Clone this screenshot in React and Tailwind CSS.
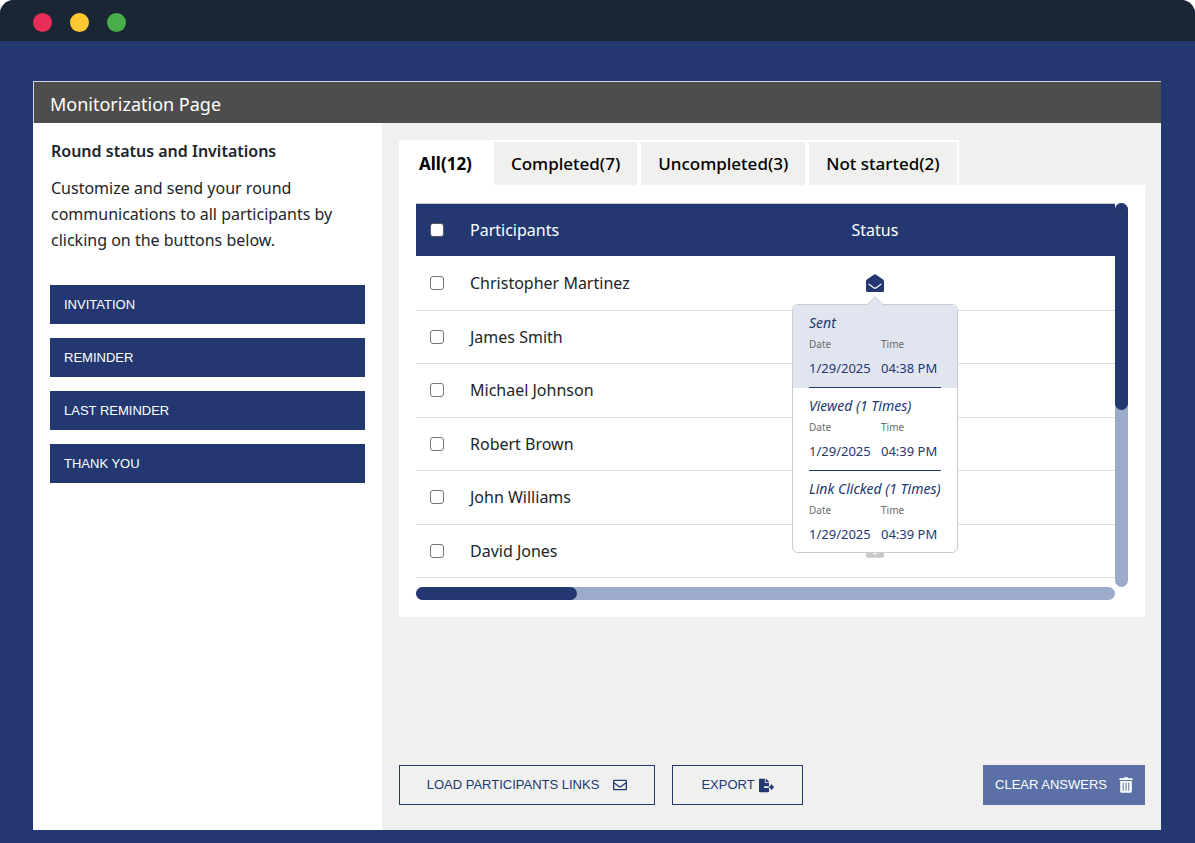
import React, { useState } from "react";
import { FaEnvelope, FaRegEnvelope, FaFileExport } from "react-icons/fa";

const mailings = ["Invitation", "Reminder", "Last reminder", "Thank you"];

const tabs = [
  { id: "all", label: "All(12)" },
  { id: "completed", label: "Completed(7)" },
  { id: "uncompleted", label: "Uncompleted(3)" },
  { id: "notStarted", label: "Not started(2)" },
];

const participants = [
  "Christopher Martinez",
  "James Smith",
  "Michael Johnson",
  "Robert Brown",
  "John Williams",
  "David Jones",
];

const history = [
  { title: "Sent", date: "1/29/2025", time: "04:38 PM" },
  { title: "Viewed (1 Times)", date: "1/29/2025", time: "04:39 PM" },
  { title: "Link Clicked (1 Times)", date: "1/29/2025", time: "04:39 PM" },
];

function OpenEnvelope() {
  return (
    <svg viewBox="0 0 18 18" className="block h-[18px] w-[18px]" aria-hidden="true">
      <path
        d="M8.2.5a1.4 1.4 0 0 1 1.6 0l7.3 5.1c.6.4.9 1 .9 1.7v9.2c0 .8-.6 1.5-1.5 1.5h-15C.6 18 0 17.3 0 16.5V7.3c0-.7.3-1.3.9-1.7Z"
        fill="#233871"
      />
      <path d="m3 10.2 4.7 3.5c.8.6 1.8.6 2.6 0L15 10.2" fill="none" stroke="#fff" strokeWidth="1.1" strokeLinecap="round" />
    </svg>
  );
}

function TrashIcon() {
  return (
    <svg viewBox="0 0 14 16" className="h-4 w-3.5" aria-hidden="true">
      <path d="M4.6 1.2C4.8.5 5.2.2 5.8.2h2.4c.6 0 1 .3 1.2 1h3.4c.6 0 .9.3.9.8v1H.3V2c0-.5.3-.8.9-.8Z" fill="#fff" />
      <path d="M1.2 4h11.6v10.3c0 .9-.6 1.5-1.5 1.5H2.7c-.9 0-1.5-.6-1.5-1.5Z" fill="#fff" />
      <path d="M4.2 6v7.5M7 6v7.5M9.8 6v7.5" stroke="#5b70a6" strokeWidth="1" strokeLinecap="round" />
    </svg>
  );
}

function StatusPopover() {
  return (
    <div className="absolute top-full left-1/2 z-10 mt-3 w-[166px] -translate-x-1/2 rounded-md border border-[#c9cbce] bg-white text-left text-[#233871]">
      <svg viewBox="0 0 18 10" className="absolute bottom-full left-1/2 -mb-px h-2.5 w-[18px] -translate-x-1/2" aria-hidden="true">
        <path d="M0 10 9 1l9 9Z" fill="#e1e5f0" />
        <path d="M0 9.5 9 .7l9 8.8" fill="none" stroke="#c9cbce" />
      </svg>
      {history.map((item, i) => (
        <div
          key={item.title}
          className={`h-[83px] px-4 pt-2.5 last:h-[81px] ${i === 0 ? "rounded-t-md bg-[#e1e5f0]" : ""}`}
        >
          <div className={`flex h-full flex-col ${i < history.length - 1 ? "border-b border-[#233871]" : ""}`}>
            <p className="text-[14px] leading-4 whitespace-nowrap italic">{item.title}</p>
            <dl className="mt-[5px] grid grid-cols-[72px_1fr]">
              <div>
                <dt className="text-[10px] leading-4 text-[#6b6b6b]">Date</dt>
                <dd className="mt-1.5 text-[13px] leading-5">{item.date}</dd>
              </div>
              <div>
                <dt className="text-[10px] leading-4 text-[#6b6b6b]">Time</dt>
                <dd className="mt-1.5 text-[13px] leading-5 whitespace-nowrap">{item.time}</dd>
              </div>
            </dl>
          </div>
        </div>
      ))}
    </div>
  );
}

function Checkbox({ label, checked, onChange, header }) {
  return (
    <input
      type="checkbox"
      aria-label={label}
      checked={checked}
      onChange={onChange}
      className={`block h-3.5 w-3.5 appearance-none rounded-[3px] border bg-white checked:bg-[#9dabcb] ${
        header ? "border-[#55555f]" : "border-[#767676]"
      }`}
    />
  );
}

export default function App() {
  const [activeTab, setActiveTab] = useState("all");
  const [selected, setSelected] = useState([]);

  const toggle = (name) =>
    setSelected((prev) => (prev.includes(name) ? prev.filter((n) => n !== name) : [...prev, name]));
  const allSelected = selected.length === participants.length;

  return (
    <div className="flex min-h-screen flex-col overflow-hidden rounded-t-[14px] bg-[#233871] font-['Noto_Sans',sans-serif] text-[#212529]">
      {/* Window bar */}
      <div className="flex h-[41px] items-center gap-[18px] bg-[#1a2634] px-[33px] pt-[3px]">
        <span className="h-[19px] w-[19px] rounded-full bg-[#e82e58]" />
        <span className="h-[19px] w-[19px] rounded-full bg-[#ffc730]" />
        <span className="h-[19px] w-[19px] rounded-full bg-[#49ae49]" />
      </div>

      <div className="flex flex-1 flex-col pt-10 pr-[34px] pb-[13px] pl-[33px]">
        <header className="border-t border-l border-[#d5d5e0] bg-[#4d4d4d] px-4 pt-1">
          <h1 className="text-[18px] leading-[37px] text-white">Monitorization Page</h1>
        </header>

        <div className="flex flex-1">
          {/* Sidebar */}
          <aside className="w-[349px] shrink-0 bg-white px-[17px] pt-4">
            <h2 className="px-px text-[16px] leading-6 font-semibold">Round status and Invitations</h2>
            <p className="mt-3 px-px text-[16px] leading-[26px]">
              Customize and send your round communications to all participants by clicking on the buttons below.
            </p>
            <div className="mt-8 flex flex-col gap-3.5">
              {mailings.map((name) => (
                <button
                  key={name}
                  type="button"
                  className="h-[39px] bg-[#233871] px-3.5 text-left font-['Liberation_Sans',sans-serif] text-[13px] text-white uppercase"
                >
                  {name}
                </button>
              ))}
            </div>
          </aside>

          {/* Participants */}
          <main className="flex min-w-0 flex-1 flex-col bg-[#f0f0ee] pt-[17px] pr-4 pb-[25px] pl-[17px]">
            <div role="tablist" className="flex">
              {tabs.map((tab) => (
                <button
                  key={tab.id}
                  type="button"
                  role="tab"
                  aria-selected={activeTab === tab.id}
                  onClick={() => setActiveTab(tab.id)}
                  className={`h-[45px] border-x-2 border-t-2 border-white text-[17px] whitespace-nowrap text-black ${
                    activeTab === tab.id ? "bg-white px-[18px] font-bold" : "px-[17px] font-medium"
                  }`}
                >
                  {tab.label}
                </button>
              ))}
            </div>

            <section className="bg-white p-[17px] pt-[18px]">
              <div className="grid grid-cols-[1fr_13px] grid-rows-[auto_13px]">
                <div className="border-t border-[#c9cbdc] pb-[9px]">
                  <table className="w-full table-fixed border-collapse">
                    <thead>
                      <tr className="h-[52px] bg-[#233871] text-left text-[16px] text-white">
                        <th className="w-[54px] pl-3.5">
                          <Checkbox
                            header
                            label="Select all participants"
                            checked={allSelected}
                            onChange={() => setSelected(allSelected ? [] : participants)}
                          />
                        </th>
                        <th className="font-normal">Participants</th>
                        <th className="w-[480px] text-center font-normal">Status</th>
                      </tr>
                    </thead>
                    <tbody>
                      {participants.map((name, i) => (
                        <tr key={name} className="h-[54px] border-b border-[#dcdee5] text-[16px] even:h-[53px] last:h-[52px]">
                          <td className="pl-3.5">
                            <Checkbox label={`Select ${name}`} checked={selected.includes(name)} onChange={() => toggle(name)} />
                          </td>
                          <td className="whitespace-nowrap">{name}</td>
                          <td>
                            <div className="relative mx-auto w-[18px]">
                              {i === 0 ? <OpenEnvelope /> : <FaEnvelope size={18} className="text-[#c8c8c8]" />}
                              {i === 0 && <StatusPopover />}
                            </div>
                          </td>
                        </tr>
                      ))}
                    </tbody>
                  </table>
                </div>
                <div className="rounded-full bg-[#9dabcb]">
                  <div className="h-[54%] rounded-full bg-[#233871]" />
                </div>
                <div className="rounded-full bg-[#9dabcb]">
                  <div className="h-full w-[23%] rounded-full bg-[#233871]" />
                </div>
              </div>
            </section>

            {/* Actions */}
            <div className="mt-auto flex gap-[17px] pt-8 font-['Liberation_Sans',sans-serif] text-[13px] text-[#233871]">
              <button type="button" className="flex h-10 w-64 items-center justify-center gap-3.5 border border-[#233871] uppercase">
                Load participants links
                <FaRegEnvelope size={14} />
              </button>
              <button type="button" className="flex h-10 w-[131px] items-center justify-center gap-1 border border-[#233871] uppercase">
                Export
                <FaFileExport size={15} />
              </button>
              <button type="button" className="ml-auto flex h-10 items-center gap-3 bg-[#5b70a6] px-3 text-white uppercase">
                Clear answers
                <TrashIcon />
              </button>
            </div>
          </main>
        </div>
      </div>
    </div>
  );
}
